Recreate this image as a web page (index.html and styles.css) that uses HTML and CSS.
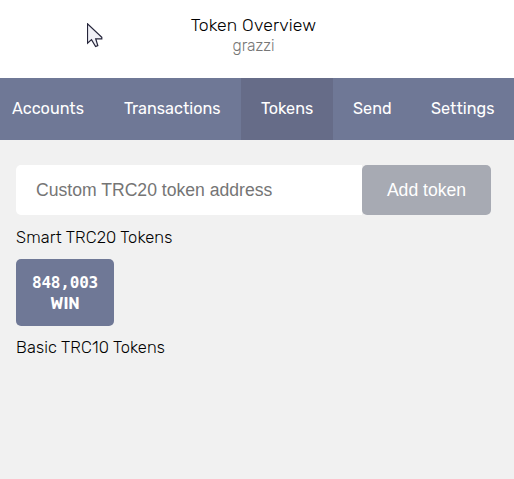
FILE: index.html
```html
<!DOCTYPE html>
<html lang="en">
<head>
<meta charset="utf-8">
<title>Token Overview</title>
<link rel="stylesheet" href="styles.css">
</head>
<body>
<header class="header">
  <h1 class="title">Token Overview</h1>
  <div class="account">grazzi</div>
</header>
<nav class="tabs">
  <a class="tab tab-accounts">Accounts</a>
  <a class="tab tab-transactions">Transactions</a>
  <a class="tab tab-tokens active">Tokens</a>
  <a class="tab tab-send">Send</a>
  <a class="tab tab-settings">Settings</a>
</nav>
<main class="content">
  <form class="add-form">
    <input class="address" type="text" placeholder="Custom TRC20 token address">
    <button class="add" type="button">Add token</button>
  </form>
  <h2 class="section smart">Smart TRC20 Tokens</h2>
  <div class="token">
    <span class="amount">848,003</span>
    <span class="symbol">WIN</span>
  </div>
  <h2 class="section basic">Basic TRC10 Tokens</h2>
</main>
<svg class="cursor" width="17" height="26" viewBox="0 0 17 26">
  <path d="M.5 .8V20.2L4.5 16.6L8.6 23.5L10.8 22.6L8.7 15.8H14.8V14.2Z" fill="#f0f0f6" stroke="#25253a" stroke-width="1.2"/>
</svg>
</body>
</html>
```
FILE: styles.css
```css
* { box-sizing: border-box; }
body {
  margin: 0;
  height: 479px;
  overflow: hidden;
  background: #f1f1f1;
  color: #000;
  font: 300 16px/21px Rubik, Roboto, sans-serif;
}
.header {
  height: 78px;
  padding: 15px 7px 0 0;
  background: #fff;
  text-align: center;
}
.title {
  margin: 0;
  font-size: 17.6px;
  font-weight: 300;
  line-height: 21px;
  letter-spacing: 0.15px;
}
.account { margin-top: -1px; color: #777; font-size: 15.8px; }
.tabs {
  display: grid;
  grid-template-columns: 104px 137px 92px 78px 103px;
  height: 62px;
  background: #6f7896;
  color: #fff;
}
.tab {
  padding: 20px 0 0 20px;
  font-size: 16.2px;
  font-weight: 400;
  white-space: nowrap;
}
.tab-accounts { padding-left: 12px; }
.active { background: #666c88; }
.content { padding: 25px 23px 0 16px; }
.add-form { display: flex; height: 50px; }
.address {
  flex: 1;
  min-width: 0;
  padding: 0 20px;
  border: 0;
  border-radius: 5px 0 0 5px;
  background: #fff;
  font: 17.6px "Liberation Sans", sans-serif;
}
.address::placeholder { color: #757575; }
.add {
  width: 129px;
  padding: 0;
  border: 0;
  border-radius: 5px;
  background: #a7aab3;
  color: #fff;
  font: 17.6px "Liberation Sans", sans-serif;
}
.section {
  margin: 12px 0 11px;
  font-size: 16.5px;
  font-weight: 300;
  line-height: 21px;
  letter-spacing: 0.15px;
}
.basic { margin-top: 11px; }
.token {
  display: flex;
  flex-direction: column;
  align-items: center;
  width: 98px;
  height: 67px;
  padding-top: 13px;
  border-radius: 5px;
  background: #6f7896;
  color: #fff;
  font-weight: 700;
}
.amount {
  font-family: "DejaVu Sans Mono", monospace;
  font-size: 16px;
  letter-spacing: -0.2px;
}
.symbol { font-size: 16px; font-weight: 600; }
.cursor { position: absolute; left: 87px; top: 23px; }
```
